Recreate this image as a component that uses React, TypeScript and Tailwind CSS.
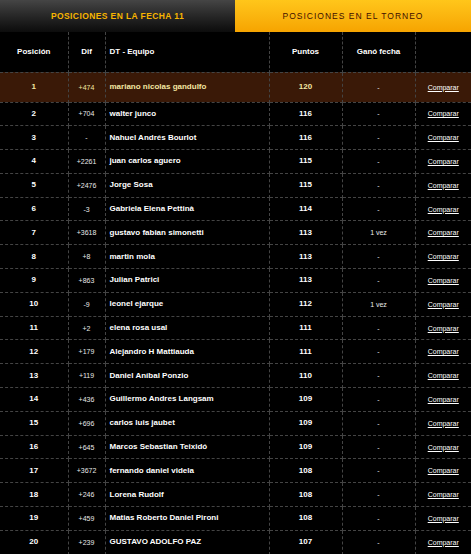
import React from 'react';

type Row = { pos: number; dif: string; name: string; pts: number; gano: string };

const ROWS: Row[] = [
  { pos: 1, dif: '+474', name: 'mariano nicolas gandulfo', pts: 120, gano: '-' },
  { pos: 2, dif: '+704', name: 'walter junco', pts: 116, gano: '-' },
  { pos: 3, dif: '-', name: 'Nahuel Andrés Bourlot', pts: 116, gano: '-' },
  { pos: 4, dif: '+2261', name: 'juan carlos aguero', pts: 115, gano: '-' },
  { pos: 5, dif: '+2476', name: 'Jorge Sosa', pts: 115, gano: '-' },
  { pos: 6, dif: '-3', name: 'Gabriela Elena Pettinà', pts: 114, gano: '-' },
  { pos: 7, dif: '+3618', name: 'gustavo fabian simonetti', pts: 113, gano: '1 vez' },
  { pos: 8, dif: '+8', name: 'martin mola', pts: 113, gano: '-' },
  { pos: 9, dif: '+863', name: 'Julian Patrici', pts: 113, gano: '-' },
  { pos: 10, dif: '-9', name: 'leonel ejarque', pts: 112, gano: '1 vez' },
  { pos: 11, dif: '+2', name: 'elena rosa usal', pts: 111, gano: '-' },
  { pos: 12, dif: '+179', name: 'Alejandro H Mattiauda', pts: 111, gano: '-' },
  { pos: 13, dif: '+119', name: 'Daniel Aníbal Ponzio', pts: 110, gano: '-' },
  { pos: 14, dif: '+436', name: 'Guillermo Andres Langsam', pts: 109, gano: '-' },
  { pos: 15, dif: '+696', name: 'carlos luis jaubet', pts: 109, gano: '-' },
  { pos: 16, dif: '+645', name: 'Marcos Sebastian Teixidó', pts: 109, gano: '-' },
  { pos: 17, dif: '+3672', name: 'fernando daniel videla', pts: 108, gano: '-' },
  { pos: 18, dif: '+246', name: 'Lorena Rudolf', pts: 108, gano: '-' },
  { pos: 19, dif: '+459', name: 'Matias Roberto Daniel Pironi', pts: 108, gano: '-' },
  { pos: 20, dif: '+239', name: 'GUSTAVO ADOLFO PAZ', pts: 107, gano: '-' },
];

const cell = 'border border-dashed border-[#444444] p-0';

export default function App() {
  return (
    <div className="w-[471px] h-[554px] overflow-hidden bg-black text-white font-['Liberation_Sans',Arial,sans-serif]">
      {/* tabs */}
      <div className="flex h-8">
        <div className="w-[235px] flex items-center justify-center bg-gradient-to-b from-[#454545] to-[#0c0c0c] text-[#f7b500] text-[8.5px] font-bold tracking-[0.4px]">
          POSICIONES EN LA FECHA 11
        </div>
        <div className="flex-1 flex items-center justify-center bg-gradient-to-b from-[#ffc61a] to-[#f6a400] text-[#3f1000] text-[8.5px] tracking-[1px]">
          POSICIONES EN EL TORNEO
        </div>
      </div>

      <table className="w-[471px] table-fixed border-collapse text-[8px] leading-none">
        <colgroup>
          <col className="w-[68px]" />
          <col className="w-[37px]" />
          <col className="w-[164px]" />
          <col className="w-[73px]" />
          <col className="w-[73px]" />
          <col className="w-[56px]" />
        </colgroup>
        <thead>
          <tr className="h-10 font-bold">
            <th className={`${cell} border-t-0 border-l-0 text-center`}>Posición</th>
            <th className={`${cell} border-t-0 text-center`}>Dif</th>
            <th className={`${cell} border-t-0 text-left pl-[4px]`}>DT - Equipo</th>
            <th className={`${cell} border-t-0 text-center`}>Puntos</th>
            <th className={`${cell} border-t-0 text-center`}>Ganó fecha</th>
            <th className={`${cell} border-t-0 border-r-0`}></th>
          </tr>
        </thead>
        <tbody>
          {ROWS.map((r) => {
            const hi = r.pos === 1;
            const strong = hi ? 'text-[#f3e6a2]' : 'text-white';
            return (
              <tr key={r.pos} className={hi ? 'h-[30px] bg-[#3a1907]' : 'h-[23.8px]'}>
                <td className={`${cell} border-l-0 text-center font-bold ${strong}`}>{r.pos}</td>
                <td className={`${cell} text-center text-[7px] ${hi ? 'text-[#f3e6a2]' : 'text-[#e8e8e8]'}`}>{r.dif}</td>
                <td className={`${cell} pl-[4px] font-bold whitespace-nowrap ${strong}`}>{r.name}</td>
                <td className={`${cell} text-center font-bold ${strong}`}>{r.pts}</td>
                <td className={`${cell} text-center text-[7px] text-[#ececec]`}>{r.gano}</td>
                <td className={`${cell} border-r-0 text-center text-[7px]`}>
                  <span className="underline text-white">Comparar</span>
                </td>
              </tr>
            );
          })}
        </tbody>
      </table>
    </div>
  );
}
